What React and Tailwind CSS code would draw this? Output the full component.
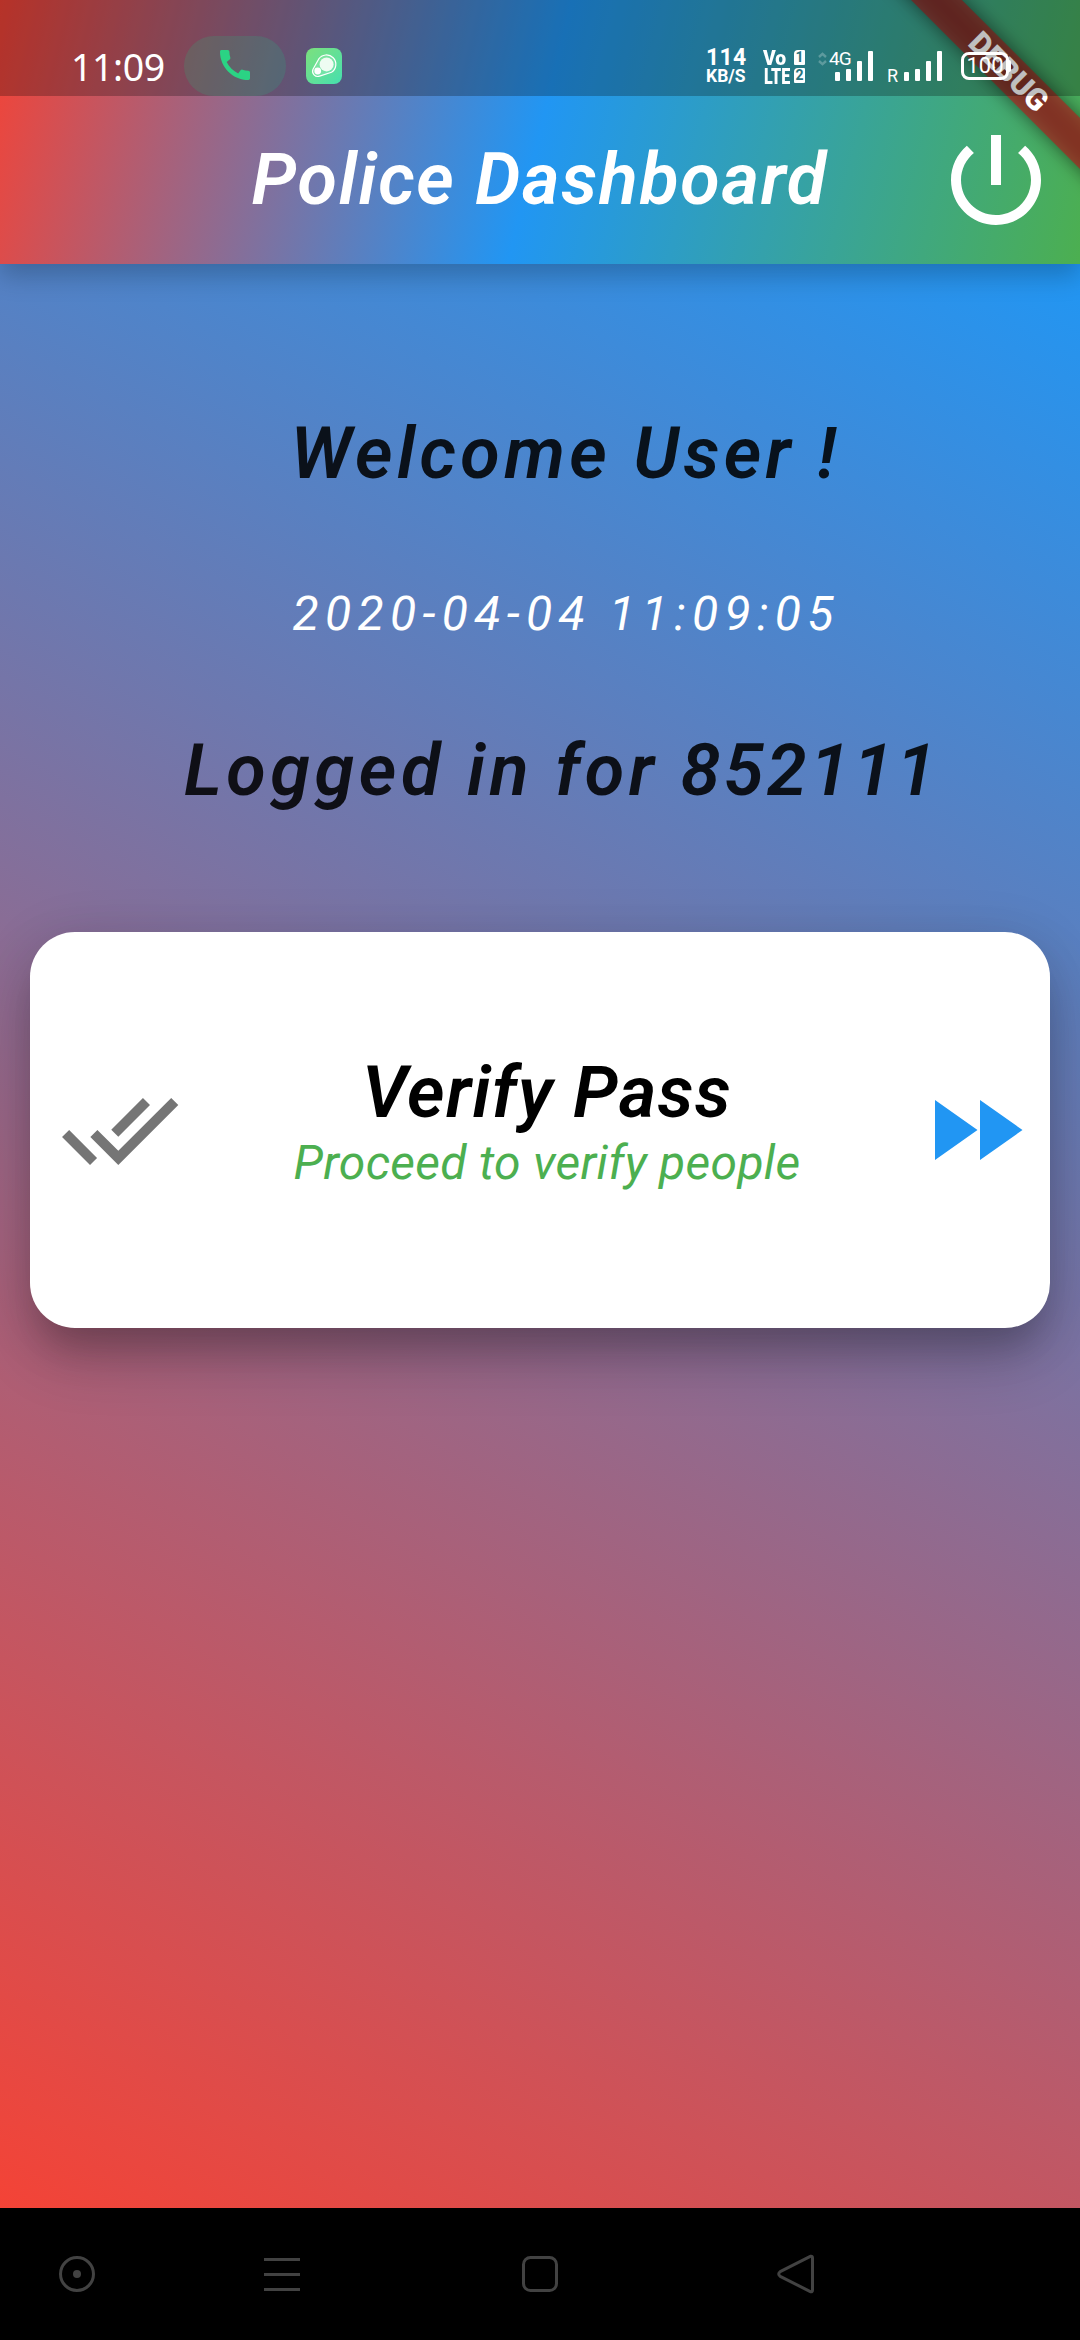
import React from "react";

function SignalBars() {
  return (
    <div className="flex h-[30px] items-end gap-[6px]">
      <span className="h-[9px] w-[5px] rounded-[1px] bg-white" />
      <span className="h-[12px] w-[5px] rounded-[1px] bg-white" />
      <span className="h-[20px] w-[5px] rounded-[1px] bg-white" />
      <span className="h-[30px] w-[5px] rounded-[1px] bg-white" />
    </div>
  );
}

function SimBadge({ children }) {
  return (
    <span className="flex h-[15px] w-[11px] items-center justify-center rounded-[1px] rounded-tl-[4px] bg-white text-[14px] leading-[15px] font-bold text-[#2a7480]">
      {children}
    </span>
  );
}

function StatusBar() {
  return (
    <div className="relative flex h-24 items-start bg-black/25 text-white">
      <div className="mt-[41px] ml-[71px] w-[95px] font-['Noto_Sans',sans-serif] text-[37.5px] leading-[52px] tracking-[-0.4px] whitespace-nowrap">
        11:09
      </div>
      <div className="mt-9 ml-[18px] flex h-[60px] w-[102px] items-center justify-center rounded-full bg-[#14d282]/16">
        <svg viewBox="3 3 18 18" className="mb-[2px] h-[30px] w-[30px] fill-[#2bd384]">
          <path d="M20.01 15.38c-1.23 0-2.42-.2-3.53-.56-.35-.12-.74-.03-1.01.24l-1.57 1.97c-2.83-1.35-5.48-3.9-6.89-6.83l1.95-1.66c.27-.28.35-.67.24-1.02-.37-1.11-.56-2.3-.56-3.53 0-.54-.45-.99-.99-.99H4.19C3.65 3 3 3.24 3 3.99 3 13.28 10.73 21 20.01 21c.71 0 .99-.63.99-1.18v-3.45c0-.54-.45-.99-.99-.99z" />
        </svg>
      </div>
      <div className="mt-12 ml-5 h-9 w-9 rounded-[8px] bg-gradient-to-br from-[#7be07c] to-[#43dfae]">
        <svg viewBox="0 0 36 36" className="h-9 w-9">
          <path d="M12.6 11.2 A9.4 9.4 0 1 1 25.5 24.3 L13.6 28.1 A5.2 5.2 0 0 1 7 21.2 Z" fill="#ffffff22" stroke="#fff" strokeWidth="1.2" strokeLinejoin="round" />
          <circle cx="20.6" cy="16.4" r="7" fill="#eefcf2" />
          <circle cx="11.7" cy="23" r="3.4" fill="#fff" />
        </svg>
      </div>
      <div className="mt-[46px] ml-[364px] flex w-[42px] flex-col font-['Roboto',sans-serif] font-bold whitespace-nowrap">
        <span className="text-[23px] leading-[23px] tracking-[0.3px]">114</span>
        <span className="-mt-[2px] text-[17.5px] leading-[18px]">KB/S</span>
      </div>
      <div className="mt-[50px] ml-[15px] grid w-[43px] grid-cols-[31px_11px] gap-y-[2px] font-['Roboto',sans-serif] font-black">
        <span className="origin-left scale-x-[0.92] text-[21px] leading-[16px]">Vo</span>
        <SimBadge>1</SimBadge>
        <span className="ml-[1px] w-[40px] origin-left scale-x-[0.73] text-[22px] leading-[17px]">LTE</span>
        <SimBadge>2</SimBadge>
      </div>
      <svg viewBox="0 0 9 14" className="mt-[52px] ml-3 h-[14px] w-[9px] fill-none stroke-white/25" strokeWidth="2.4">
        <path d="M1 5 L4.5 1.8 L8 5 M1 9 L4.5 12.2 L8 9" />
      </svg>
      <div className="relative mt-[51px] ml-[8px]">
        <div className="absolute top-[-2px] left-[-6px] font-['Roboto',sans-serif] text-[19px] leading-[20px] tracking-[-1px]">4G</div>
        <SignalBars />
      </div>
      <div className="mt-[67px] ml-[14px] w-[11px] font-['Roboto',sans-serif] text-[18px] leading-[18px]">R</div>
      <div className="mt-[51px] ml-[6px]">
        <SignalBars />
      </div>
      <div className="mt-[52px] ml-[19px] flex items-center">
        <div className="flex h-7 w-[48px] items-center justify-center rounded-[8px] border-[3px] border-white font-['Roboto',sans-serif] text-[22px] leading-[22px]">
          100
        </div>
        <span className="h-[12px] w-[2px] rounded-r-[2px] bg-white" />
      </div>
    </div>
  );
}

function DebugBanner() {
  return (
    <div className="absolute top-0 right-0 h-[264px] w-[264px] overflow-hidden">
      <div className="absolute top-[53.5px] left-[12px] h-9 w-[361px] rotate-45 bg-black/50 blur-[9px]" />
      <div className="absolute top-[53.5px] left-[12px] flex h-9 w-[361px] rotate-45 items-center justify-center bg-[#b71c1c]/63 font-['Roboto',sans-serif] text-[30.6px] font-black text-white">
        DEBUG
      </div>
    </div>
  );
}

function AppBar() {
  return (
    <header className="relative z-10 h-[264px] bg-[linear-gradient(103.74deg,#f44336_0%,#2196f3_50%,#4caf50_100%)] shadow-[0_12px_24px_rgba(0,0,0,0.22)]">
      <DebugBanner />
      <StatusBar />
      <div className="relative flex h-[168px] items-center">
        <h1 className="ml-[251.5px] w-[684.5px] text-[72px] leading-[84px] font-semibold tracking-[1.65px] whitespace-nowrap text-white italic">
          Police Dashboard
        </h1>
        <svg viewBox="0 0 24 24" className="h-[120px] w-[120px] fill-white">
          <path d="M13 3h-2v10h2V3zm4.83 2.17l-1.42 1.42C17.99 7.86 19 9.81 19 12c0 3.87-3.13 7-7 7s-7-3.13-7-7c0-2.19 1.01-4.14 2.58-5.42L6.17 5.17C4.23 6.82 3 9.26 3 12c0 4.97 4.03 9 9 9s9-4.03 9-9c0-2.74-1.23-5.18-3.17-6.83z" />
        </svg>
      </div>
    </header>
  );
}

function VerifyCard() {
  return (
    <section className="mx-[30px] mt-[119px] flex h-[396px] items-center justify-between rounded-[45px] bg-white pr-[15px] pl-[30px] shadow-[0_30px_30px_-12px_rgba(0,0,0,0.12),0_30px_60px_rgba(0,0,0,0.2),0_9px_60px_rgba(0,0,0,0.1)]">
      <svg viewBox="0 0 24 24" className="h-[120px] w-[120px] fill-[#757575]">
        <path d="M18 7l-1.41-1.41-6.34 6.34 1.41 1.41L18 7zm4.24-1.41L11.66 16.17 7.48 12l-1.41 1.41L11.66 19l12-12-1.42-1.41zM.41 13.41L6 19l1.41-1.41L1.83 12 .41 13.41z" />
      </svg>
      <div className="mr-[1px] mb-[18px] flex flex-col items-center whitespace-nowrap italic">
        <h2 className="text-[72px] leading-[84px] font-semibold tracking-[1.3px] text-black">Verify Pass</h2>
        <p className="text-[48px] leading-[56px] tracking-[0.3px] text-[#4caf50]">Proceed to verify people</p>
      </div>
      <svg viewBox="0 0 24 24" className="h-[120px] w-[120px] fill-[#2196f3]">
        <path d="M4 18l8.5-6L4 6v12zm9-12v12l8.5-6L13 6z" />
      </svg>
    </section>
  );
}

function NavBar() {
  return (
    <nav className="flex h-[132px] items-center bg-black fill-none stroke-[#424242]">
      <svg viewBox="0 0 40 40" className="ml-[57px] h-10 w-10" strokeWidth="3">
        <circle cx="20" cy="20" r="16.5" />
        <circle cx="20" cy="20" r="4" className="fill-[#424242] stroke-none" />
      </svg>
      <svg viewBox="0 0 40 40" className="ml-[165px] h-10 w-10" strokeWidth="3">
        <path d="M2 5.5h36M2 20.5h36M2 35.5h36" />
      </svg>
      <svg viewBox="0 0 40 40" className="ml-[218px] h-10 w-10" strokeWidth="3">
        <rect x="3.5" y="3.5" width="33" height="33" rx="7" />
      </svg>
      <svg viewBox="0 0 40 40" className="ml-[216px] h-10 w-10" strokeWidth="3" strokeLinejoin="round">
        <path d="M34.8 2.2 L4.2 17.6 Q1.2 20 4.2 22.4 L34.8 37.8 Q36.5 38 36.5 36 L36.5 4 Q36.5 2 34.8 2.2 Z" />
      </svg>
    </nav>
  );
}

export default function App() {
  return (
    <div className="flex h-[2340px] w-[1080px] flex-col overflow-hidden bg-black font-['Roboto',sans-serif]">
      <AppBar />
      <main className="h-[1944px] overflow-hidden bg-[linear-gradient(209.05deg,#2196f3,#f44336)] pt-[148px]">
        <p className="pl-[290.5px] text-[72px] leading-[84px] font-semibold tracking-[4.35px] whitespace-nowrap text-black/87 italic">Welcome User !</p>
        <p className="mt-[90px] pl-[292.5px] text-[48px] leading-[56px] tracking-[6.35px] whitespace-nowrap text-white italic">2020-04-04 11:09:05</p>
        <p className="mt-[87px] pl-[184px] text-[72px] leading-[84px] font-semibold tracking-[4.5px] whitespace-nowrap text-black/87 italic">
          Logged in for <span className="tracking-[3.3px]">852111</span>
        </p>
        <VerifyCard />
      </main>
      <NavBar />
    </div>
  );
}
